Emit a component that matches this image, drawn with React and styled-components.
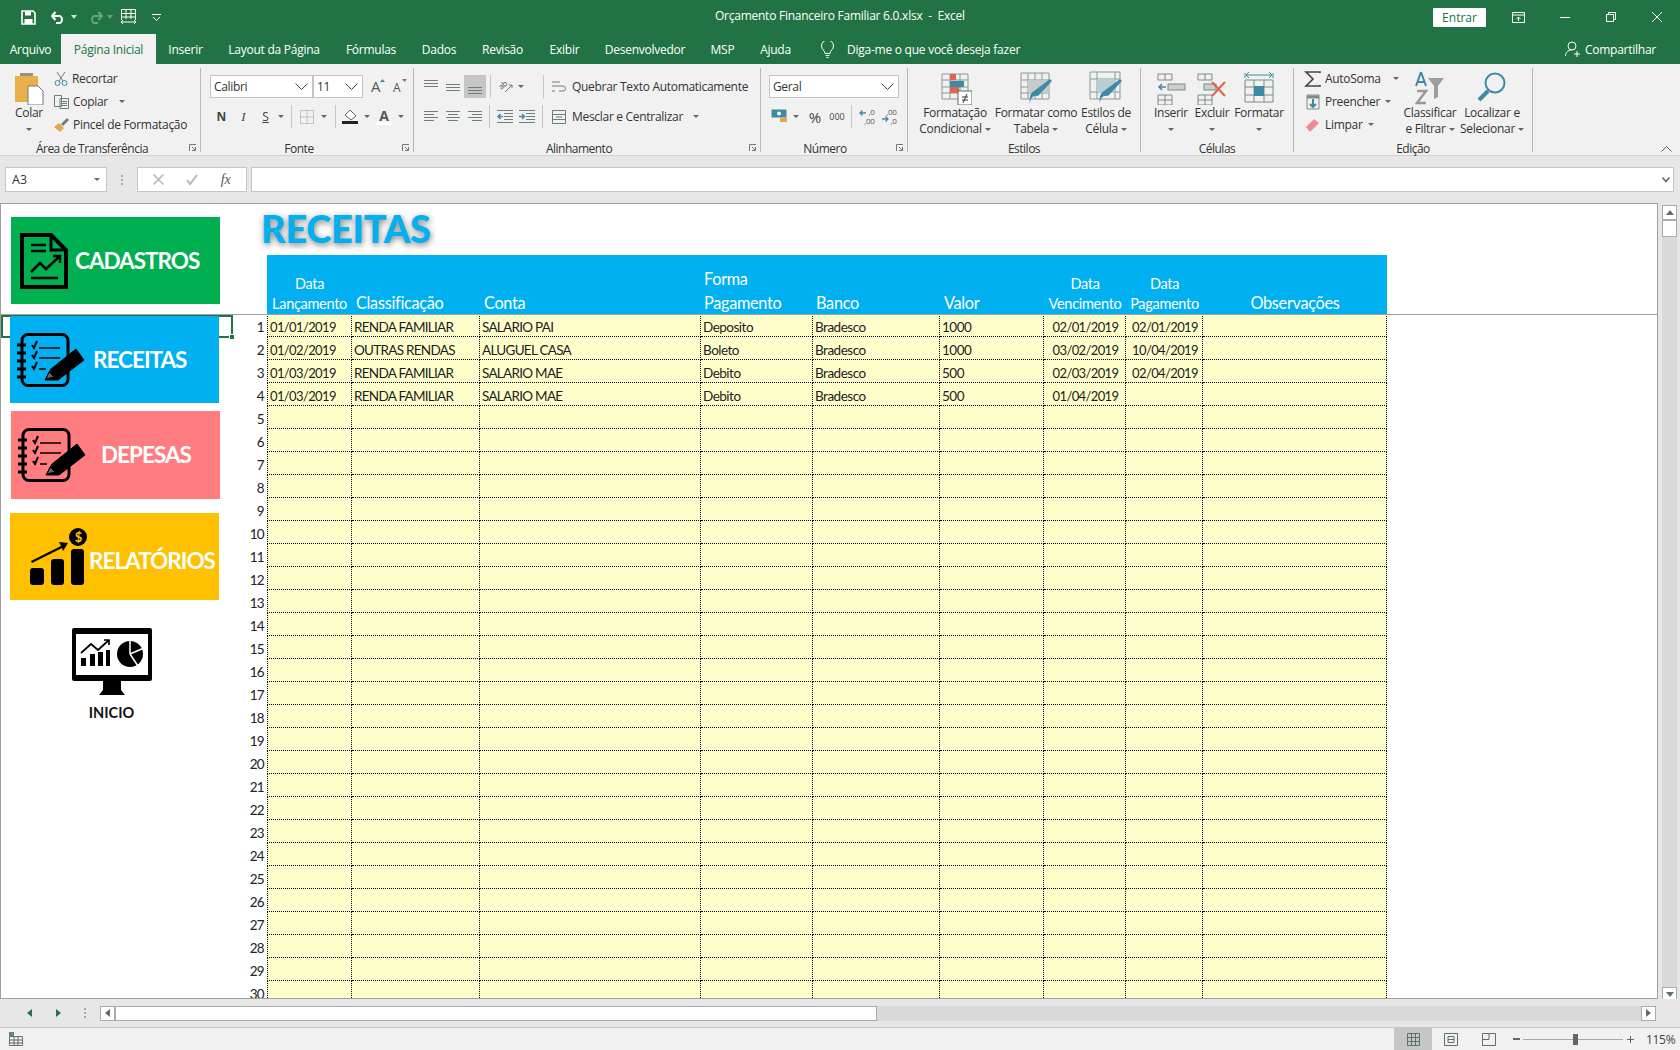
import styled, { createGlobalStyle } from 'styled-components'

const GlobalStyle = createGlobalStyle`
	html, body {
		margin: 0;
		padding: 0;
		width: 1680px;
		height: 1050px;
		overflow: hidden;
		background: #e6e7e6;
		font-family: "Open Sans", "Noto Sans", sans-serif;
	}
	* {
		box-sizing: border-box;
	}
`

const Page = styled.div`
	width: 1680px;
	height: 1050px;
	display: flex;
	flex-direction: column;
	overflow: hidden;
`

// Title bar
const TitleBar = styled.header`
	height: 34px;
	flex: none;
	background: #217346;
	color: #fff;
	display: flex;
	align-items: center;
	position: relative;
	font-size: 12px;
	letter-spacing: -0.25px;
`
const QuickTools = styled.div`
	display: flex;
	align-items: center;
	padding-left: 21px;
`
const QuickIcon = styled.svg`
	display: block;
	margin-left: ${p => p.$ml || 0}px;
`
const WindowTitle = styled.div`
	position: absolute;
	left: 715px;
	top: 7px;
	white-space: pre;
	line-height: 18px;
`
const WindowTools = styled.div`
	margin-left: auto;
	display: flex;
	align-items: center;
`
const SignIn = styled.button`
	width: 53px;
	height: 19px;
	background: #fff;
	color: #217346;
	border: 0;
	border-radius: 1px;
	padding: 0;
	font: inherit;
	margin-right: 26px;
`
const WinIcon = styled.svg`
	display: block;
	margin-right: ${p => p.$mr || 0}px;
`

// Tabs
const TabBar = styled.nav`
	height: 30px;
	flex: none;
	background: #217346;
	color: #fff;
	display: flex;
	align-items: stretch;
	font-size: 12px;
	letter-spacing: -0.25px;
`
const Tab = styled.div`
	width: ${p => p.$w}px;
	display: flex;
	align-items: center;
	justify-content: center;
	white-space: nowrap;
	background: ${p => (p.$active ? '#f1f1f1' : 'transparent')};
	color: ${p => (p.$active ? '#217346' : '#fff')};
`
const TellMe = styled.div`
	display: flex;
	align-items: center;
	gap: 13px;
	margin-left: 18px;
`
const ShareLink = styled.div`
	margin-left: auto;
	display: flex;
	align-items: center;
	gap: 4px;
	padding-right: 24px;
`

// Ribbon
const Ribbon = styled.section`
	height: 92px;
	flex: none;
	background: #f1f1f1;
	border-bottom: 1px solid #d2d2d2;
	display: flex;
	padding-top: 4px;
	font-size: 12px;
	letter-spacing: -0.3px;
	color: #333;
	position: relative;
`
const Group = styled.div`
	width: ${p => p.$w}px;
	height: 84px;
	flex: none;
	border-right: 1px solid #b8b8b8;
	display: flex;
	flex-direction: column;
`
const GroupBody = styled.div`
	height: 70px;
	flex: none;
	display: flex;
	padding-left: ${p => p.$pl || 0}px;
`
const GroupLabel = styled.div`
	height: 14px;
	line-height: 22px;
	text-align: center;
	position: relative;
	padding-right: ${p => p.$pr || 0}px;
	white-space: nowrap;
	letter-spacing: -0.5px;
`
const Launcher = styled.svg`
	position: absolute;
	right: 4px;
	top: 6px;
`
const LargeButton = styled.div`
	width: ${p => p.$w}px;
	flex: none;
	margin-left: ${p => p.$ml || 0}px;
	display: flex;
	flex-direction: column;
	align-items: center;
	text-align: center;
	line-height: 16px;
	white-space: nowrap;
	color: #333;
`
const LargeIcon = styled.svg`
	display: block;
	height: 34px;
	margin-top: 3px;
	flex: none;
`
const Caret = styled.span`
	display: inline-block;
	width: 0;
	height: 0;
	border-left: 3px solid transparent;
	border-right: 3px solid transparent;
	border-top: 3px solid #666;
	vertical-align: middle;
	margin-left: ${p => p.$ml === undefined ? 3 : p.$ml}px;
`
const CaretLine = styled.div`
	height: 16px;
	display: flex;
	align-items: center;
	justify-content: center;
`
const SmallStack = styled.div`
	display: flex;
	flex-direction: column;
	width: ${p => (p.$w ? `${p.$w}px` : 'auto')};
	margin-left: ${p => p.$ml || 0}px;
	margin-top: -1px;
	flex: none;
`
const SmallRow = styled.div`
	height: 23px;
	display: flex;
	align-items: center;
	white-space: nowrap;
	gap: ${p => p.$gap || 4}px;
	color: #333;
`
const SmallIcon = styled.svg`
	display: block;
	flex: none;
	overflow: visible;
	margin-left: ${p => p.$ml || 0}px;
`
const Column = styled.div`
	display: flex;
	flex-direction: column;
	margin-left: ${p => p.$ml || 0}px;
	padding-top: ${p => p.$pt || 0}px;
	flex: none;
`
const ToolRow = styled.div`
	height: ${p => p.$h || 32}px;
	display: flex;
	align-items: center;
	margin-left: ${p => p.$ml || 0}px;
`
const Combo = styled.div`
	width: ${p => p.$w}px;
	height: 23px;
	flex: none;
	background: #fff;
	border: 1px solid #c4c4c4;
	display: flex;
	align-items: center;
	justify-content: space-between;
	padding: 0 4px 0 3px;
	color: #333;
	letter-spacing: -0.35px;
`
const RowSep = styled.span`
	width: 1px;
	height: 23px;
	background: #c6c6c6;
	flex: none;
	margin: 0 ${p => p.$mr || 6}px 0 ${p => p.$ml || 6}px;
`
const ToolGlyph = styled.span`
	width: ${p => p.$w || 16}px;
	height: 23px;
	flex: none;
	display: flex;
	align-items: center;
	justify-content: center;
	margin-left: ${p => p.$ml || 0}px;
	background: ${p => (p.$on ? '#c6c6c6' : 'transparent')};
	color: ${p => p.$color || '#444'};
	font-family: ${p => p.$serif ? '"Liberation Serif", serif' : '"Open Sans", sans-serif'};
	font-style: ${p => (p.$italic ? 'italic' : 'normal')};
	font-weight: ${p => (p.$bold ? 700 : 400)};
	font-size: ${p => p.$fs || 12}px;
	text-decoration: ${p => (p.$under ? 'underline' : 'none')};
	letter-spacing: 0;
`
const CollapseIcon = styled.svg`
	position: absolute;
	right: 8px;
	bottom: 3px;
`

// Formula bar
const FormulaBar = styled.section`
	height: 47px;
	flex: none;
	background: #e6e7e6;
	display: flex;
	padding: 11px 6px 0 5px;
	align-items: flex-start;
	font-size: 12.5px;
	color: #333;
`
const NameBox = styled.div`
	width: 102px;
	height: 25px;
	background: #fff;
	border: 1px solid #c6c6c6;
	display: flex;
	align-items: center;
	justify-content: space-between;
	padding: 0 6px;
`
const BarDots = styled.div`
	width: 30px;
	flex: none;
	height: 25px;
	display: flex;
	flex-direction: column;
	align-items: center;
	justify-content: center;
	gap: 2px;
`
const BarDot = styled.i`
	width: 2px;
	height: 2px;
	background: #aaa;
`
const FormulaButtons = styled.div`
	width: 110px;
	height: 25px;
	background: #fff;
	border: 1px solid #c6c6c6;
	display: flex;
	align-items: center;
	justify-content: space-around;
	color: #b5b5b5;
	padding: 0 4px;
`
const FxLabel = styled.span`
	font-family: "Liberation Serif", serif;
	font-style: italic;
	font-size: 14px;
	color: #555;
`
const FormulaInput = styled.div`
	flex: 1;
	height: 25px;
	margin-left: 4px;
	background: #fff;
	border: 1px solid #c6c6c6;
	display: flex;
	align-items: center;
	justify-content: flex-end;
	padding-right: 3px;
`

// Worksheet
const Workspace = styled.main`
	height: 796px;
	flex: none;
	display: flex;
	background: #e6e7e6;
`
const Sheet = styled.div`
	width: 1658px;
	flex: none;
	height: 796px;
	background: #fff;
	border: 1px solid #a0a0a0;
	display: flex;
	position: relative;
	overflow: hidden;
	font-family: Lato, "Liberation Sans", sans-serif;
`
const ShapeColumn = styled.aside`
	width: 231px;
	flex: none;
	display: flex;
	flex-direction: column;
	padding-top: 13px;
	position: relative;
	z-index: 2;
`
const Shape = styled.div`
	width: 209px;
	height: ${p => p.$h || 87}px;
	flex: none;
	background: ${p => p.$bg};
	color: #fff;
	margin-left: ${p => p.$ml}px;
	margin-top: ${p => p.$mt || 0}px;
	padding-left: ${p => p.$pl}px;
	display: flex;
	align-items: center;
	gap: ${p => p.$gap}px;
	font-size: 22.5px;
	font-weight: 700;
	line-height: 28px;
	white-space: nowrap;
	letter-spacing: -1px;
`
const ShapeIcon = styled.svg`
	display: block;
	flex: none;
`
const ShapeLabel = styled.span`
	padding-top: ${p => p.$pt || 0}px;
`
const HomeShape = styled.div`
	margin-top: 28px;
	margin-left: 70px;
	width: 81px;
	display: flex;
	flex-direction: column;
	align-items: center;
	font-size: 14.5px;
	font-weight: 700;
	color: #111;
	gap: 9px;
	line-height: 18px;
`
const TableArea = styled.div`
	flex: none;
	display: flex;
	flex-direction: column;
`
const SheetTitle = styled.h1`
	margin: 0;
	height: 51px;
	flex: none;
	padding: 1px 0 0 29px;
	font-size: 38px;
	line-height: 46px;
	font-weight: 900;
	color: #00b0f0;
	text-shadow: 1px 2px 6px rgba(50, 50, 50, 0.65);
	letter-spacing: -0.3px;
`
const Table = styled.div`
	display: grid;
	flex: none;
	grid-template-columns: 35px 85px 128px 221px 112px 127px 104px 82px 77px 184px;
	grid-template-rows: 59px;
	grid-auto-rows: 23px;
	font-size: 13.5px;
	letter-spacing: -0.5px;
	color: #1c1c1c;
`
const HeaderRow = styled.div`
	grid-column: 1 / -1;
	display: grid;
	grid-template-columns: subgrid;
`
const HeaderGap = styled.div``
const HeaderCell = styled.div`
	background: #00b0f0;
	color: #fff;
	display: flex;
	flex-direction: column;
	justify-content: flex-end;
	align-items: ${p => (p.$center ? 'center' : 'flex-start')};
	padding-left: ${p => p.$pl || 0}px;
	font-size: ${p => p.$fs || 16.3}px;
	line-height: ${p => p.$lh || 23.5}px;
	letter-spacing: -0.3px;
	white-space: nowrap;
	font-weight: 400;
`
const RowNumber = styled.div`
	text-align: right;
	padding-right: 3px;
	line-height: 27px;
	font-size: 13.5px;
	color: #222;
	letter-spacing: -0.7px;
`
const Cell = styled.div`
	border-right: 1px dotted #000;
	border-bottom: 1px dotted #000;
	border-left: ${p => (p.$first ? '1px dotted #000' : '0')};
	background: #ffffcc;
	padding-left: 2px;
	line-height: 26px;
	text-align: ${p => (p.$center ? 'center' : 'left')};
	font-size: ${p => (p.$date ? '13px' : 'inherit')};
	letter-spacing: ${p => (p.$caps ? '-0.72px' : p.$date ? '-0.62px' : 'inherit')};
	white-space: nowrap;
	overflow: hidden;
`
const FreezeLine = styled.div`
	position: absolute;
	left: 0;
	right: 0;
	top: 110px;
	height: 1px;
	background: #a0a0a0;
	z-index: 1;
`
const SelectedCell = styled.div`
	position: absolute;
	left: 0;
	top: 111px;
	width: 232px;
	height: 23px;
	border: 2px solid #217346;
	z-index: 1;
`
const FillHandle = styled.i`
	position: absolute;
	right: -4px;
	bottom: -4px;
	width: 6px;
	height: 6px;
	background: #217346;
	border: 1px solid #fff;
`
const VScroll = styled.div`
	width: 22px;
	flex: none;
	padding: 2px 3px 0 4px;
	display: flex;
	flex-direction: column;
`
const VTrack = styled.div`
	flex: 1;
	background: #d9dad9;
	display: flex;
	flex-direction: column;
	justify-content: space-between;
	margin-bottom: -3px;
`
const ScrollBtn = styled.div`
	width: ${p => p.$w || 15}px;
	height: ${p => p.$h || 15}px;
	flex: none;
	background: #fff;
	border: 1px solid #ababab;
	display: flex;
	align-items: center;
	justify-content: center;
	margin-left: ${p => (p.$end ? 'auto' : '0')};
`
const ScrollThumb = styled.div`
	width: ${p => p.$w || 15}px;
	height: ${p => p.$h || 17}px;
	flex: none;
	background: #fff;
	border: 1px solid #ababab;
`
const Arrow = styled.i`
	width: 0;
	height: 0;
	display: block;
	margin-left: ${p => p.$ml || 0}px;
	${p => p.$dir === 'up' && 'border-left:4px solid transparent;border-right:4px solid transparent;border-bottom:5px solid #5a6f6a;'}
	${p => p.$dir === 'down' && 'border-left:4px solid transparent;border-right:4px solid transparent;border-top:5px solid #5a6f6a;'}
	${p => p.$dir === 'left' && `border-top:4px solid transparent;border-bottom:4px solid transparent;border-right:5px solid ${p.$color || '#5a6f6a'};`}
	${p => p.$dir === 'right' && `border-top:4px solid transparent;border-bottom:4px solid transparent;border-left:5px solid ${p.$color || '#5a6f6a'};`}
`

// Bottom bars
const SheetBar = styled.div`
	height: 28px;
	flex: none;
	background: #e6e7e6;
	display: flex;
	align-items: center;
`
const SheetNav = styled.div`
	width: 100px;
	flex: none;
	display: flex;
	align-items: center;
	padding-left: 27px;
`
const NavDots = styled.div`
	display: flex;
	flex-direction: column;
	gap: 2px;
	margin-left: 23px;
`
const HScroll = styled.div`
	width: 1556px;
	height: 15px;
	display: flex;
	background: #d9dad9;
`
const StatusBar = styled.footer`
	height: 23px;
	flex: none;
	background: #f1f1f1;
	border-top: 1px solid #c6c6c6;
	display: flex;
	align-items: stretch;
	font-size: 12px;
	letter-spacing: -0.3px;
	color: #444;
	padding-left: 8px;
`
const ViewButton = styled.div`
	width: ${p => p.$w || 38}px;
	display: flex;
	align-items: center;
	justify-content: center;
	background: ${p => (p.$on ? '#c6c6c6' : 'transparent')};
	flex: none;
	margin-left: ${p => p.$ml || 0}px;
`
const ZoomControl = styled.div`
	display: flex;
	align-items: center;
	margin-left: 5px;
	flex: none;
`
const ZoomTrack = styled.div`
	width: 100px;
	height: 1px;
	background: #a8a8a8;
	margin: 0 4px 0 3px;
	position: relative;
`
const ZoomThumb = styled.i`
	position: absolute;
	left: 50px;
	top: -5px;
	width: 5px;
	height: 11px;
	background: #666;
`
const ZoomText = styled.span`
	margin-left: 12px;
`

const rowsData = [
	['01/01/2019', 'RENDA FAMILIAR', 'SALARIO PAI', 'Deposito', 'Bradesco', '1000', '02/01/2019', '02/01/2019'],
	['01/02/2019', 'OUTRAS RENDAS', 'ALUGUEL CASA', 'Boleto', 'Bradesco', '1000', '03/02/2019', '10/04/2019'],
	['01/03/2019', 'RENDA FAMILIAR', 'SALARIO MAE', 'Debito', 'Bradesco', '500', '02/03/2019', '02/04/2019'],
	['01/03/2019', 'RENDA FAMILIAR', 'SALARIO MAE', 'Debito', 'Bradesco', '500', '01/04/2019', '']
]

const rows = Array.from({ length: 30 }, (_, i) => rowsData[i] || ['', '', '', '', '', '', '', ''])

const tabs = [
	['Arquivo', 61], ['Página Inicial', 95, true], ['Inserir', 59], ['Layout da Página', 118],
	['Fórmulas', 76], ['Dados', 60], ['Revisão', 67], ['Exibir', 57], ['Desenvolvedor', 104],
	['MSP', 51], ['Ajuda', 55]
]

const GRAY = '#6d7f7b'
const TEAL = '#3e8aa5'

const LauncherMark = () => (
	<Launcher width="7" height="7" viewBox="0 0 7 7" fill="none" stroke="#777">
		<path d="M.5 7V.5H7M3 3l3.500 3.500M6.500 3v3.500H3" />
	</Launcher>
)

const ComboChevron = () => (
	<SmallIcon width="13" height="7" viewBox="0 0 13 7" fill="none" stroke="#444">
		<path d="M.5.500l6 6 6-6" />
	</SmallIcon>
)

const NotebookIcon = () => (
	<ShapeIcon width="68" height="54" viewBox="0 0 68 54" fill="none" stroke="#000">
		<rect x="5" y="1.500" width="46" height="51" rx="6" strokeWidth="3" />
		{[12, 20, 28, 36, 44].map(y => (
			<path key={y} d={`M0 ${y}h9`} strokeWidth="3" />
		))}
		<path d="M15 12l2 3 3-7M15 22l2 3 3-7M15 33l2 3 3-7" strokeWidth="2" />
		<path d="M22 15h21M22 25h21M22 36h7" strokeWidth="1.500" />
		<path d="M28 47l6-11 25-20 8 11-26 20z" fill="#000" strokeWidth="1" />
		<path d="M29 46l3-7 5 5z" fill="#fff" fillOpacity=".4" strokeWidth="1" />
	</ShapeIcon>
)

const AlignIcon = ({ lines, align, $ml }) => {
	const ys = lines.split(',').map(Number)
	const path = (y, i) => {
		if (!align) return `M0 ${y + 0.5}h14`
		const w = i % 2 ? 10 : 14
		const x = align === 'left' ? 0 : align === 'right' ? 14 - w : (14 - w) / 2
		return `M${x} ${y + 0.5}h${w}`
	}
	return (
		<SmallIcon $ml={$ml} width="14" height="15" viewBox="0 0 14 15" fill="none" stroke={GRAY}>
			{ys.map((y, i) => <path key={y} d={path(y, i)} />)}
		</SmallIcon>
	)
}

const IndentIcon = ({ dir, $ml }) => (
	<SmallIcon $ml={$ml} width="16" height="13" viewBox="0 0 16 13" fill="none" stroke={GRAY}>
		<path d="M7 3.500h9M7 6.500h9M7 9.500h9M0 .5h16M0 12.500h16" />
		<path d={dir === 'in' ? 'M0 6.500h5M3 4l2.500 2.500L3 9' : 'M6 6.500H1M3.500 4L1 6.500 3.500 9'} stroke={TEAL} strokeWidth="1.500" />
	</SmallIcon>
)

const FontSizeIcon = ({ size, up, $ml }) => (
	<SmallIcon $ml={$ml} width="14" height="23" viewBox="0 0 14 23">
		<text x="0" y="17" fontSize={size} fontFamily="'Open Sans', sans-serif" fill="#555">A</text>
		<path d={up ? 'M9 7l2.500-3L14 7z' : 'M9 4h5l-2.500 3z'} fill={TEAL} />
	</SmallIcon>
)

const DecimalIcon = ({ top, bottom, left, $ml }) => (
	<SmallIcon $ml={$ml} width="16" height="23" viewBox="0 0 16 23">
		<text x="15.500" y="10" fontSize="8" textAnchor="end" fontFamily="'Open Sans', sans-serif" fill="#555">{top}</text>
		<text x="15.500" y="19" fontSize="8" textAnchor="end" fontFamily="'Open Sans', sans-serif" fill="#555">{bottom}</text>
		<path d={left ? 'M7 8H1M3.500 5.500L1 8l2.500 2.500' : 'M1 14h6M4.500 11.500L7 14l-2.500 2.500'} stroke={TEAL} strokeWidth="1.300" fill="none" />
	</SmallIcon>
)

const RowCells = ({ number, row }) => (
	<>
		<RowNumber>{number}</RowNumber>
		{row.map((value, c) => (
			<Cell key={c} $first={c === 0} $center={c === 6 || c === 7} $caps={c === 1 || c === 2} $date={c === 0 || c === 6 || c === 7}>{value}</Cell>
		))}
		<Cell />
	</>
)

const App = () => (
	<Page>
		<GlobalStyle />
		<TitleBar>
			<QuickTools>
				<QuickIcon width="15" height="15" viewBox="0 0 15 15" fill="none">
					<path d="M1 1h11l2 2v11H1z" stroke="#fff" strokeWidth="1.600" />
					<path d="M4 1.500h6v4H4zM3.500 9h8v5h-8z" fill="#fff" />
				</QuickIcon>
				<QuickIcon $ml={15} width="15" height="14" viewBox="0 0 15 14" fill="none" stroke="#fff" strokeWidth="2">
					<path d="M1 6h8a4 4 0 0 1 0 7H5M4.500 2L1 6l3.500 4" />
				</QuickIcon>
				<QuickIcon $ml={5} width="6" height="4" viewBox="0 0 6 4"><path d="M0 0h6L3 4z" fill="#cfe0d6" /></QuickIcon>
				<QuickIcon $ml={11} width="15" height="14" viewBox="0 0 15 14" fill="none" stroke="#6aa186" strokeWidth="2">
					<path d="M14 6H6a4 4 0 0 0 0 7h4M10.500 2L14 6l-3.500 4" />
				</QuickIcon>
				<QuickIcon $ml={4} width="6" height="4" viewBox="0 0 6 4"><path d="M0 0h6L3 4z" fill="#6aa186" /></QuickIcon>
				<QuickIcon $ml={7} width="17" height="16" viewBox="0 0 17 16" fill="none" stroke="#fff">
					<path d="M1.500 11V.5h14V11M1.500 4.500h14M1.500 8h14M6 .5V10M11 .5V10" />
					<path d="M1 13h15M3 11l-2 2 2 2M14 11l2 2-2 2" />
				</QuickIcon>
				<QuickIcon $ml={15} width="9" height="7" viewBox="0 0 9 7" fill="none" stroke="#fff">
					<path d="M0 .5h9M1 3l3.500 3.500L8 3" />
				</QuickIcon>
			</QuickTools>
			<WindowTitle>Orçamento Financeiro Familiar 6.0.xlsx  -  Excel</WindowTitle>
			<WindowTools>
				<SignIn>Entrar</SignIn>
				<WinIcon $mr={35} width="13" height="11" viewBox="0 0 13 11" fill="none" stroke="#fff">
					<path d="M.5.500h12v10H.5zM.5 3h12M6.500 9V5M4.500 7l2-2 2 2" />
				</WinIcon>
				<WinIcon $mr={36} width="10" height="1" viewBox="0 0 10 1"><path d="M0 .5h10" stroke="#fff" /></WinIcon>
				<WinIcon $mr={36} width="10" height="10" viewBox="0 0 10 10" fill="none" stroke="#fff">
					<path d="M.5 2.500h7v7h-7zM2.500 2.500v-2h7v7h-2" />
				</WinIcon>
				<WinIcon $mr={18} width="10" height="10" viewBox="0 0 10 10" fill="none" stroke="#fff">
					<path d="M0 0l10 10M10 0L0 10" />
				</WinIcon>
			</WindowTools>
		</TitleBar>

		<TabBar>
			{tabs.map(([label, w, active]) => (
				<Tab key={label} $w={w} $active={active}>{label}</Tab>
			))}
			<TellMe>
				<svg width="13" height="17" viewBox="0 0 13 17" fill="none" stroke="#fff">
					<path d="M4 12.500c0-3-3.500-4-3.500-7.500a6 6 0 0 1 12 0c0 3.500-3.500 4.500-3.500 7.500zM4.500 14.500h4M5.500 16.500h2" />
				</svg>
				<span>Diga-me o que você deseja fazer</span>
			</TellMe>
			<ShareLink>
				<svg width="16" height="16" viewBox="0 0 16 16" fill="none" stroke="#fff">
					<circle cx="7" cy="5" r="4" />
					<path d="M.5 15c0-3.500 2.500-6 6-6M9 13h6M12 10v6" />
				</svg>
				<span>Compartilhar</span>
			</ShareLink>
		</TabBar>

		<Ribbon>
			<Group $w={201}>
				<GroupBody>
					<LargeButton $w={36} $ml={11}>
						<LargeIcon width="30" viewBox="0 0 30 34" fill="none">
							<rect x="1" y="5" width="23" height="26" fill="#e8b04a" />
							<path d="M6 5V2h13v3z" fill="#9a8f78" />
							<path d="M14 15h10l5 5v14H14z" fill="#fff" stroke="#777" />
						</LargeIcon>
						<span>Colar</span>
						<CaretLine><Caret $ml={0} /></CaretLine>
					</LargeButton>
					<SmallStack $ml={7}>
						<SmallRow>
							<SmallIcon width="14" height="15" viewBox="0 0 14 15" fill="none" stroke={GRAY}>
								<path d="M3 1l6 9M11 1L5 10" />
								<circle cx="3.500" cy="12" r="2.500" stroke={TEAL} />
								<circle cx="10.500" cy="12" r="2.500" stroke={TEAL} />
							</SmallIcon>
							<span>Recortar</span>
						</SmallRow>
						<SmallRow>
							<SmallIcon width="15" height="14" viewBox="0 0 15 14" fill="none" stroke={GRAY}>
								<path d="M.5.500h7v11h-7zM6 3.500h8.500v10H6z" fill="#f1f1f1" />
								<path d="M8 6.500h5M8 8.500h5M8 10.500h5" />
							</SmallIcon>
							<span>Copiar</span>
							<Caret $ml={7} />
						</SmallRow>
						<SmallRow>
							<SmallIcon width="15" height="14" viewBox="0 0 15 14">
								<path d="M0 9l5-4 5 5-4 4z" fill="#e8a54a" />
								<path d="M7 6l6-6 2 2-6 6z" fill="#6d7f7b" />
							</SmallIcon>
							<span>Pincel de Formatação</span>
						</SmallRow>
					</SmallStack>
				</GroupBody>
				<GroupLabel $pr={16}>
					Área de Transferência
					<LauncherMark />
				</GroupLabel>
			</Group>

			<Group $w={213}>
				<GroupBody>
					<Column $ml={9} $pt={7}>
						<ToolRow $h={23}>
							<Combo $w={103}>Calibri<ComboChevron /></Combo>
							<Combo $w={50}>11<ComboChevron /></Combo>
							<FontSizeIcon size={15} up $ml={8} />
							<FontSizeIcon size={12} $ml={8} />
						</ToolRow>
						<ToolRow $h={37} $ml={4}>
							<ToolGlyph $bold $w={15}>N</ToolGlyph>
							<ToolGlyph $italic $serif $w={15} $ml={7} $fs={13}>I</ToolGlyph>
							<ToolGlyph $under $w={15} $ml={7}>S</ToolGlyph>
							<Caret $ml={5} />
							<RowSep $ml={7} $mr={8} />
							<SmallIcon width="14" height="14" viewBox="0 0 14 14" fill="none" stroke="#999" strokeDasharray="1 1"><path d="M.5.500h13v13H.5zM7 .5v13M.5 7h13" /></SmallIcon>
							<Caret $ml={7} />
							<RowSep $ml={8} $mr={6} />
							<SmallIcon width="16" height="15" viewBox="0 0 16 15"><path d="M8 1l6 6-5 4-6-5z" fill="#fff" stroke="#666" /><rect y="12" width="16" height="3" fill="#222" /></SmallIcon>
							<Caret $ml={6} />
							<SmallIcon $ml={6} width="16" height="16" viewBox="0 0 16 16">
								<text x="8" y="12" fontSize="14" fontWeight="700" textAnchor="middle" fontFamily="'Open Sans', sans-serif" fill="#555">A</text>
								<rect y="13" width="16" height="3" fill="#fff" />
							</SmallIcon>
							<Caret $ml={6} />
						</ToolRow>
					</Column>
				</GroupBody>
				<GroupLabel $pr={16}>
					Fonte
					<LauncherMark />
				</GroupLabel>
			</Group>

			<Group $w={347}>
				<GroupBody>
					<Column $ml={10} $pt={7}>
						<ToolRow $h={23}>
							<AlignIcon lines="1,4,7" />
							<AlignIcon lines="5,8,11" $ml={8} />
							<ToolGlyph $w={22} $on $ml={4}><AlignIcon lines="8,11,14" /></ToolGlyph>
							<RowSep $ml={4} $mr={7} />
							<SmallIcon width="16" height="23" viewBox="0 0 16 23" fill="none">
								<text x="1" y="13" fontSize="8" fontFamily="'Open Sans', sans-serif" fill="#555" transform="rotate(-40 5 11)">ab</text>
								<path d="M7 17l7-7M14 10h-3M14 10v3" stroke={GRAY} />
							</SmallIcon>
							<Caret $ml={4} />
							<RowSep $ml={19} $mr={8} />
							<SmallRow $gap={6}>
								<SmallIcon width="14" height="14" viewBox="0 0 14 14" fill="none" stroke={GRAY}><path d="M0 2h8M0 6h11a2.500 2.500 0 0 1 0 5H7M0 11h3" /></SmallIcon>
								<span>Quebrar Texto Automaticamente</span>
							</SmallRow>
						</ToolRow>
						<ToolRow $h={37}>
							<AlignIcon lines="2,5,8,11" align="left" />
							<AlignIcon lines="2,5,8,11" align="center" $ml={8} />
							<AlignIcon lines="2,5,8,11" align="right" $ml={8} />
							<RowSep $ml={7} $mr={7} />
							<IndentIcon />
							<IndentIcon dir="in" $ml={6} />
							<RowSep $ml={7} $mr={9} />
							<SmallRow $gap={6}>
								<SmallIcon width="14" height="14" viewBox="0 0 14 14" fill="none" stroke={GRAY}><path d="M.5.500h13v13H.5zM.5 4.500h13M.5 9.500h13M4 7h6" /></SmallIcon>
								<span>Mesclar e Centralizar</span>
							</SmallRow>
							<Caret $ml={10} />
						</ToolRow>
					</Column>
				</GroupBody>
				<GroupLabel $pr={16}>
					Alinhamento
					<LauncherMark />
				</GroupLabel>
			</Group>

			<Group $w={147}>
				<GroupBody>
					<Column $ml={8} $pt={7}>
						<ToolRow $h={23}>
							<Combo $w={130}>Geral<ComboChevron /></Combo>
						</ToolRow>
						<ToolRow $h={37} $ml={2}>
							<SmallIcon width="17" height="15" viewBox="0 0 17 15"><rect x=".5" y=".5" width="15" height="8" fill={TEAL} /><circle cx="8" cy="4.500" r="2" fill="#fff" /><path d="M9 9h7v4H9z" fill="#e8a54a" /></SmallIcon>
							<Caret $ml={5} />
							<ToolGlyph $w={14} $ml={9} $fs={15}>%</ToolGlyph>
							<ToolGlyph $w={16} $ml={7} $fs={9}>000</ToolGlyph>
							<RowSep $ml={6} $mr={7} />
							<DecimalIcon top=",0" bottom=",00" left />
							<DecimalIcon top=",00" bottom=",0" $ml={6} />
						</ToolRow>
					</Column>
				</GroupBody>
				<GroupLabel $pr={18}>
					Número
					<LauncherMark />
				</GroupLabel>
			</Group>

			<Group $w={233}>
				<GroupBody $pl={9}>
					<LargeButton $w={76}>
						<LargeIcon width="34" viewBox="0 0 34 34" fill="none">
							<path d="M4 3h26v25H4zM4 9h26M4 16h26M4 22h26M12 3v25M22 3v25" stroke="#8a9a96" />
							<rect x="12" y="3" width="6" height="6" fill="#e2634f" />
							<rect x="12" y="10" width="14" height="6" fill={TEAL} />
							<rect x="12" y="16" width="9" height="6" fill="#e2634f" />
							<rect x="20" y="20" width="14" height="14" fill="#fff" stroke="#666" />
							<path d="M24 26h6M24 29h6M29 23l-4 9" stroke="#333" />
						</LargeIcon>
						<span>Formatação</span>
						<span>Condicional<Caret /></span>
					</LargeButton>
					<LargeButton $w={84} $ml={1}>
						<LargeIcon width="34" viewBox="0 0 34 34" fill="none">
							<path d="M2 2h28v26H2zM2 9h28M2 16h28M2 22h28M9 2v26M16 2v26M23 2v26" stroke="#8a9a96" />
							<rect x="9" y="9" width="21" height="13" fill="#c6cbc9" />
							<path d="M11 33c0-6 3-9 8-8l14-15-2-2-16 12c-4 2-5 7-4 13z" fill={TEAL} />
						</LargeIcon>
						<span>Formatar como</span>
						<span>Tabela<Caret /></span>
					</LargeButton>
					<LargeButton $w={52} $ml={2}>
						<LargeIcon width="34" viewBox="0 0 34 34" fill="none">
							<path d="M1 1h30v27H1zM1 8h30M1 21h30M8 1v27M26 1v27" stroke="#8a9a96" />
							<rect x="8" y="8" width="18" height="13" fill="#b8cfd2" />
							<path d="M11 33c0-6 3-9 8-8l14-15-2-2-16 12c-4 2-5 7-4 13z" fill={TEAL} />
						</LargeIcon>
						<span>Estilos de</span>
						<span>Célula<Caret /></span>
					</LargeButton>
				</GroupBody>
				<GroupLabel>Estilos</GroupLabel>
			</Group>

			<Group $w={153}>
				<GroupBody $pl={11}>
					<LargeButton $w={38}>
						<LargeIcon width="30" viewBox="0 0 30 34" fill="none" stroke="#7d8c88">
							<path d="M2 3h14v6H2zM9 3v6M2 24h14v10H2zM9 24v10M2 29h14" />
							<rect x="12" y="13" width="17" height="6" fill="#c9cfcd" />
							<path d="M3 16h7M6 13l-3 3 3 3" stroke={TEAL} strokeWidth="1.500" />
						</LargeIcon>
						<span>Inserir</span>
						<CaretLine><Caret $ml={0} /></CaretLine>
					</LargeButton>
					<LargeButton $w={38} $ml={3}>
						<LargeIcon width="30" viewBox="0 0 30 34" fill="none" stroke="#7d8c88">
							<path d="M1 3h14v6H1zM8 3v6M1 24h14v10H1zM8 24v10M1 29h14" />
							<rect x="7" y="13" width="12" height="6" fill="#c9cfcd" />
							<path d="M15 11l13 14M28 11L15 25" stroke="#e2634f" strokeWidth="2" />
						</LargeIcon>
						<span>Excluir</span>
						<CaretLine><Caret $ml={0} /></CaretLine>
					</LargeButton>
					<LargeButton $w={50} $ml={3}>
						<LargeIcon width="30" viewBox="0 0 30 34" fill="none" stroke="#7d8c88">
							<path d="M1 9h28v22H1zM1 16h28M1 24h28M10 9v22M20 9v22" />
							<rect x="10" y="15" width="10" height="10" fill={TEAL} stroke="none" />
							<path d="M1 2v5M29 2v5M2 4h26M5 1L2 4l3 3M25 1l3 3-3 3" stroke={TEAL} />
						</LargeIcon>
						<span>Formatar</span>
						<CaretLine><Caret $ml={0} /></CaretLine>
					</LargeButton>
				</GroupBody>
				<GroupLabel>Células</GroupLabel>
			</Group>

			<Group $w={239}>
				<GroupBody $pl={11}>
					<SmallStack $w={95}>
						<SmallRow>
							<SmallIcon width="16" height="16" viewBox="0 0 16 16" fill="none" stroke="#444" strokeWidth="1.600"><path d="M15 2V1H1l7 7-7 7h14v-1" /></SmallIcon>
							<span>AutoSoma</span>
							<Caret $ml={8} />
						</SmallRow>
						<SmallRow>
							<SmallIcon width="16" height="16" viewBox="0 0 16 16" fill="none" stroke="#7d8c88"><path d="M2 1h12v14H2z" /><path d="M2 3h12" strokeWidth="3" /><path d="M8 5v8M5 10l3 3 3-3" stroke={TEAL} strokeWidth="2" /></SmallIcon>
							<span>Preencher</span>
							<Caret $ml={1} />
						</SmallRow>
						<SmallRow>
							<SmallIcon width="16" height="14" viewBox="0 0 16 14"><path d="M1 9l8-8 5 4-8 8H4z" fill="#f08a8f" /></SmallIcon>
							<span>Limpar</span>
							<Caret $ml={1} />
						</SmallRow>
					</SmallStack>
					<LargeButton $w={60}>
						<LargeIcon width="30" viewBox="0 0 30 34" fill="none">
							<path d="M6 1L1 15M6 1l5 14M3 11h6" stroke={TEAL} strokeWidth="2" />
							<path d="M2 20h9L2 32h9" stroke="#999" strokeWidth="2.500" />
							<path d="M13 7h16l-6 8v11l-4 2V15z" fill="#9a9f9d" />
						</LargeIcon>
						<span>Classificar</span>
						<span>e Filtrar<Caret /></span>
					</LargeButton>
					<LargeButton $w={64}>
						<LargeIcon width="30" viewBox="0 0 30 34" fill="none">
							<circle cx="18" cy="12" r="9.500" stroke={TEAL} strokeWidth="2" />
							<path d="M11 20L2 29" stroke={TEAL} strokeWidth="4" />
						</LargeIcon>
						<span>Localizar e</span>
						<span>Selecionar<Caret /></span>
					</LargeButton>
				</GroupBody>
				<GroupLabel>Edição</GroupLabel>
			</Group>
			<CollapseIcon width="11" height="6" viewBox="0 0 11 6" fill="none" stroke="#555"><path d="M.5 5.500l5-5 5 5" /></CollapseIcon>
		</Ribbon>

		<FormulaBar>
			<NameBox>A3<Caret $ml={0} /></NameBox>
			<BarDots><BarDot /><BarDot /><BarDot /></BarDots>
			<FormulaButtons>
				<SmallIcon width="11" height="11" viewBox="0 0 11 11" fill="none" stroke="#b8b8b8" strokeWidth="1.600"><path d="M.5.500l10 10M10.500.5l-10 10" /></SmallIcon>
				<SmallIcon width="12" height="11" viewBox="0 0 12 11" fill="none" stroke="#b8b8b8" strokeWidth="2"><path d="M1 6l3 4 7-9" /></SmallIcon>
				<FxLabel>fx</FxLabel>
			</FormulaButtons>
			<FormulaInput>
				<SmallIcon width="8" height="6" viewBox="0 0 8 6" fill="none" stroke="#5a6f6a" strokeWidth="1.600"><path d="M.5.500L4 4.500 7.500.5" /></SmallIcon>
			</FormulaInput>
		</FormulaBar>

		<Workspace>
			<Sheet>
				<FreezeLine />
				<SelectedCell><FillHandle /></SelectedCell>
				<ShapeColumn>
					<Shape $bg="#00b050" $ml={10} $pl={9} $gap={7}>
						<ShapeIcon width="48" height="56" viewBox="0 0 48 56" fill="none" stroke="#000">
							<path d="M2 2h29l15 15v37H2z" strokeWidth="4" />
							<path d="M31 2v15h15" strokeWidth="3" />
							<path d="M11 12h15M11 18h15" strokeWidth="2.500" />
							<path d="M11 39l9-9 6 6 14-13M33 23h7v7" strokeWidth="2.500" />
							<path d="M11 45h27" strokeWidth="2.500" />
						</ShapeIcon>
						<span>CADASTROS</span>
					</Shape>
					<Shape $bg="#00b0f0" $ml={9} $mt={12} $pl={7} $gap={8}>
						<NotebookIcon />
						<span>RECEITAS</span>
					</Shape>
					<Shape $bg="#ff7c80" $h={88} $ml={10} $mt={8} $pl={7} $gap={15}>
						<NotebookIcon />
						<span>DEPESAS</span>
					</Shape>
					<Shape $bg="#ffc000" $ml={9} $mt={14} $pl={20} $gap={1}>
						<ShapeIcon width="58" height="57" viewBox="0 0 58 57">
							<rect x="0" y="40" width="14" height="17" rx="3" />
							<rect x="21" y="31" width="13" height="26" rx="3" />
							<rect x="41" y="21" width="13" height="36" rx="3" />
							<path d="M1 33l30-15-2-4 9 1-5 8-1-3L2 35z" />
							<circle cx="48" cy="9" r="9" />
							<text x="48" y="13.500" fontSize="13" fontWeight="700" fill="#ffc000" textAnchor="middle" fontFamily="Lato, sans-serif">$</text>
						</ShapeIcon>
						<ShapeLabel $pt={9}>RELATÓRIOS</ShapeLabel>
					</Shape>
					<HomeShape>
						<ShapeIcon width="80" height="67" viewBox="0 0 80 67">
							<rect x="0" y="0" width="80" height="53" rx="2" />
							<rect x="4" y="6" width="72" height="41" fill="#fff" />
							<path d="M27 67l4-5v-9h18v9l4 5z" />
							<path d="M9 38h5V30H9zM18 38h5V26h-5zM26 38h5V24h-5zM34 38h4V22h-4z" />
							<path d="M9 25l10-9 7 6 11-10M32 12h5v5" fill="none" stroke="#000" strokeWidth="1.700" />
							<circle cx="58" cy="26" r="13" />
							<path d="M58 26V12M58 26l14-6M58 26l8 12" stroke="#fff" strokeWidth="1.500" />
						</ShapeIcon>
						<span>INICIO</span>
					</HomeShape>
				</ShapeColumn>
				<TableArea>
					<SheetTitle>RECEITAS</SheetTitle>
					<Table>
						<HeaderRow>
							<HeaderGap />
							<HeaderCell $center $fs={14.5} $lh={20}><span>Data</span><span>Lançamento</span></HeaderCell>
							<HeaderCell $pl={4}>Classificação</HeaderCell>
							<HeaderCell $pl={4}>Conta</HeaderCell>
							<HeaderCell $pl={3}><span>Forma</span><span>Pagamento</span></HeaderCell>
							<HeaderCell $pl={3}>Banco</HeaderCell>
							<HeaderCell $pl={4}>Valor</HeaderCell>
							<HeaderCell $center $fs={14.5} $lh={20}><span>Data</span><span>Vencimento</span></HeaderCell>
							<HeaderCell $center $fs={14.5} $lh={20}><span>Data</span><span>Pagamento</span></HeaderCell>
							<HeaderCell $center>Observações</HeaderCell>
						</HeaderRow>
						{rows.map((row, i) => (
							<RowCells key={i} number={i + 1} row={row} />
						))}
					</Table>
				</TableArea>
			</Sheet>
			<VScroll>
				<ScrollBtn><Arrow $dir="up" /></ScrollBtn>
				<VTrack>
					<ScrollThumb />
					<ScrollBtn><Arrow $dir="down" /></ScrollBtn>
				</VTrack>
			</VScroll>
		</Workspace>

		<SheetBar>
			<SheetNav>
				<Arrow $dir="left" $color="#217346" />
				<Arrow $dir="right" $color="#217346" $ml={24} />
				<NavDots><BarDot /><BarDot /><BarDot /></NavDots>
			</SheetNav>
			<HScroll>
				<ScrollBtn><Arrow $dir="left" /></ScrollBtn>
				<ScrollThumb $w={762} $h={15} />
				<ScrollBtn $end><Arrow $dir="right" /></ScrollBtn>
			</HScroll>
		</SheetBar>

		<StatusBar>
			<ViewButton $w={16}>
				<svg width="14" height="14" viewBox="0 0 14 14" fill="none" stroke="#5f6f6b"><path d="M.5 4.500h13v9H.5zM.5 8h13M.5 11h13M5 4.500v9M9 4.500v9" /><rect x="0" y="0" width="5" height="4" fill="#6d7f7b" stroke="none" /></svg>
			</ViewButton>
			<ViewButton $on $ml={1370}>
				<svg width="13" height="13" viewBox="0 0 13 13" fill="none" stroke="#5f6f6b"><path d="M.5.500h12v12H.5zM.5 4.500h12M.5 8.500h12M4.500.5v12M8.500.5v12" /></svg>
			</ViewButton>
			<ViewButton>
				<svg width="14" height="13" viewBox="0 0 14 13" fill="none" stroke="#5f6f6b"><path d="M.5.500h13v12H.5zM4 3.500h6v6H4zM4 6.500h6" /></svg>
			</ViewButton>
			<ViewButton>
				<svg width="14" height="13" viewBox="0 0 14 13" fill="none" stroke="#5f6f6b"><path d="M.5 12.500V.5h13v12zM7 .5v6H.5" /></svg>
			</ViewButton>
			<ZoomControl>
				<svg width="7" height="2" viewBox="0 0 7 2"><path d="M0 0h7v2H0z" fill="#666" /></svg>
				<ZoomTrack><ZoomThumb /></ZoomTrack>
				<svg width="7" height="7" viewBox="0 0 7 7"><path d="M3 0h1v3h3v1H4v3H3V4H0V3h3z" fill="#666" /></svg>
				<ZoomText>115%</ZoomText>
			</ZoomControl>
		</StatusBar>
	</Page>
)

export default App
